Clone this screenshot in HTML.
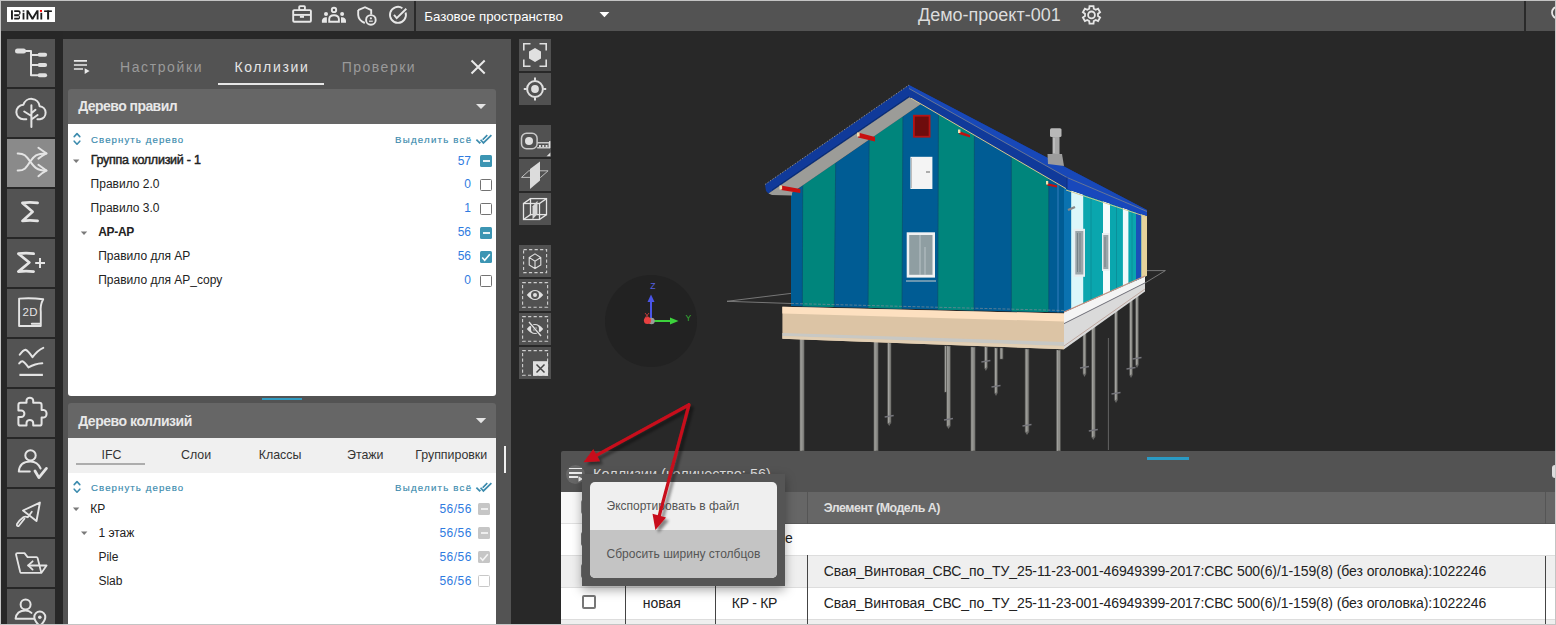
<!DOCTYPE html>
<html><head><meta charset="utf-8">
<style>
*{margin:0;padding:0;box-sizing:border-box}
html,body{width:1556px;height:625px;overflow:hidden;background:#282828;font-family:"Liberation Sans",sans-serif}
.a{position:absolute}
.t{position:absolute;white-space:nowrap;line-height:1}
#frame{position:absolute;left:0;top:0;width:1556px;height:625px;border:1px solid #c4c4c4;pointer-events:none;z-index:100}
.ib{position:absolute;left:7px;width:48px;height:48px;background:#535353}
.vb{position:absolute;left:519px;width:32px;height:32px;background:#515151}
.tr{font-size:12px;color:#222}
.num{position:absolute;white-space:nowrap;line-height:1;font-size:12px;color:#2f7be0;text-align:right;width:60px;margin-top:0.7px}
.cb{position:absolute;width:12px;height:12px;border:1.8px solid #727272;border-radius:1.5px;background:#fff}
.cbf{position:absolute;width:12px;height:12px;border-radius:1.5px;background:#3c95b3}
.cbg{position:absolute;width:12px;height:12px;border-radius:1.5px;background:#c6c6c6}
.lnk{font-size:9.7px;color:#3a8aad;letter-spacing:1.06px;-webkit-text-stroke:0.15px #3a8aad}
svg{position:absolute;left:0;top:0}
</style></head><body>
<!-- ===== header ===== -->
<div class="a" style="left:0;top:0;width:1556px;height:31px;background:#535353"></div>
<div class="a" style="left:414px;top:1px;width:2px;height:30px;background:#2a2a2a"></div>
<div class="t" style="left:424.3px;top:9.6px;font-size:13.3px;color:#fff">Базовое пространство</div>
<div class="t" style="left:918px;top:6px;font-size:18px;color:#dcdcdc">Демо-проект-001</div>
<div class="a" style="left:1524px;top:1px;width:2px;height:30px;background:#2a2a2a"></div>

<!-- ===== left dark strip + sidebar ===== -->
<div class="a" style="left:0;top:31px;width:63px;height:594px;background:#272727"></div>
<div class="ib" style="top:39px"></div>
<div class="ib" style="top:89px"></div>
<div class="ib" style="top:139px;background:#8a8a8a"></div>
<div class="ib" style="top:189px"></div>
<div class="ib" style="top:239px"></div>
<div class="ib" style="top:289px"></div>
<div class="ib" style="top:339px"></div>
<div class="ib" style="top:389px"></div>
<div class="ib" style="top:439px"></div>
<div class="ib" style="top:489px"></div>
<div class="ib" style="top:539px"></div>
<div class="ib" style="top:589px"></div>

<!-- ===== panel ===== -->
<div class="a" style="left:63px;top:39px;width:448px;height:586px;background:#535353"></div>
<div class="t" style="left:120px;top:60.4px;font-size:14px;color:#9a9a9a;letter-spacing:1.6px">Настройки</div>
<div class="t" style="left:234.4px;top:60.4px;font-size:14px;color:#e6e6e6;letter-spacing:1.64px">Коллизии</div>
<div class="t" style="left:341.7px;top:60.4px;font-size:14px;color:#9a9a9a;letter-spacing:1.5px">Проверки</div>
<div class="a" style="left:218px;top:83px;width:106px;height:2px;background:#e6e6e6"></div>

<!-- rules tree section -->
<div class="a" style="left:68px;top:89px;width:428px;height:35px;background:#666;border-radius:3px 3px 0 0"></div>
<div class="t" style="left:78.2px;top:99.1px;font-size:14px;font-weight:bold;color:#e8e8e8;letter-spacing:-0.55px">Дерево правил</div>
<div class="a" style="left:68px;top:124px;width:428px;height:272px;background:#fff;border-radius:0 0 3px 3px"></div>
<div class="t lnk" style="left:91px;top:134.8px">Свернуть дерево</div>
<div class="t lnk" style="left:395.1px;top:134.8px;letter-spacing:1.21px">Выделить всё</div>

<div class="t tr" style="left:90.7px;top:153.9px;font-size:12.5px;letter-spacing:-0.25px;-webkit-text-stroke:0.45px #222">Группа коллизий - 1</div>
<div class="t tr" style="left:90.6px;top:177.8px">Правило 2.0</div>
<div class="t tr" style="left:90.6px;top:201.8px">Правило 3.0</div>
<div class="t tr" style="left:98.2px;top:225.8px;font-weight:bold;font-size:12px;letter-spacing:-0.3px">АР-АР</div>
<div class="t tr" style="left:98.2px;top:249.8px">Правило для АР</div>
<div class="t tr" style="left:98.2px;top:273.8px">Правило для АР_сору</div>

<div class="num" style="left:411px;top:154.4px">57</div>
<div class="num" style="left:411px;top:177.8px">0</div>
<div class="num" style="left:411px;top:201.8px">1</div>
<div class="num" style="left:411px;top:225.8px">56</div>
<div class="num" style="left:411px;top:249.8px">56</div>
<div class="num" style="left:411px;top:273.8px">0</div>

<div class="cbf" style="left:480px;top:155px"><div class="a" style="left:2.5px;top:5px;width:7px;height:2px;background:#e8f2f6"></div></div>
<div class="cb" style="left:480px;top:179px"></div>
<div class="cb" style="left:480px;top:203px"></div>
<div class="cbf" style="left:480px;top:227px"><div class="a" style="left:2.5px;top:5px;width:7px;height:2px;background:#e8f2f6"></div></div>
<div class="cbf" style="left:480px;top:251px"></div>
<div class="cb" style="left:480px;top:275px"></div>

<!-- splitter -->
<div class="a" style="left:262px;top:398px;width:40px;height:2px;background:#309cc2"></div>

<!-- collisions tree section -->
<div class="a" style="left:68px;top:403px;width:428px;height:35px;background:#666;border-radius:3px 3px 0 0"></div>
<div class="t" style="left:78.2px;top:413.7px;font-size:14px;font-weight:bold;color:#e8e8e8;letter-spacing:-0.47px">Дерево коллизий</div>
<div class="a" style="left:68px;top:438px;width:428px;height:35px;background:#f0f0f0"></div>
<div class="a" style="left:76px;top:463px;width:69px;height:2px;background:#adadad"></div>
<div class="t tr" style="left:101.6px;top:448.7px;font-size:12.4px;color:#333">IFC</div>
<div class="t tr" style="left:181px;top:448.7px;font-size:12.4px;color:#333">Слои</div>
<div class="t tr" style="left:258.7px;top:448.7px;font-size:12.4px;color:#333">Классы</div>
<div class="t tr" style="left:347px;top:448.7px;font-size:12.4px;color:#333">Этажи</div>
<div class="t tr" style="left:415.2px;top:448.7px;font-size:12.4px;color:#333">Группировки</div>
<div class="a" style="left:504px;top:446px;width:2px;height:27px;background:#f0f0f0"></div>
<div class="a" style="left:68px;top:473px;width:428px;height:152px;background:#fff"></div>
<div class="t lnk" style="left:91px;top:482.8px">Свернуть дерево</div>
<div class="t lnk" style="left:395.1px;top:482.8px;letter-spacing:1.21px">Выделить всё</div>
<div class="t tr" style="left:90.2px;top:502.8px">КР</div>
<div class="t tr" style="left:98.4px;top:526.8px">1 этаж</div>
<div class="t tr" style="left:98.4px;top:550.8px">Pile</div>
<div class="t tr" style="left:98.4px;top:574.8px">Slab</div>
<div class="num" style="left:411.2px;top:502.8px;letter-spacing:0.45px;margin-left:0.6px">56/56</div>
<div class="num" style="left:411.2px;top:526.8px;letter-spacing:0.45px;margin-left:0.6px">56/56</div>
<div class="num" style="left:411.2px;top:550.8px;letter-spacing:0.45px;margin-left:0.6px">56/56</div>
<div class="num" style="left:411.2px;top:574.8px;letter-spacing:0.45px;margin-left:0.6px">56/56</div>
<div class="cbg" style="left:478px;top:503px"><div class="a" style="left:2.5px;top:5px;width:7px;height:2px;background:#eee"></div></div>
<div class="cbg" style="left:478px;top:527px"><div class="a" style="left:2.5px;top:5px;width:7px;height:2px;background:#eee"></div></div>
<div class="cbg" style="left:478px;top:551px"></div>
<div class="cb" style="left:478px;top:575px;border-color:#c8c8c8"></div>

<!-- ===== viewport toolbar ===== -->
<div class="vb" style="top:39px"></div>
<div class="vb" style="top:73px"></div>
<div class="vb" style="top:125px"></div>
<div class="vb" style="top:159px"></div>
<div class="vb" style="top:193px"></div>
<div class="vb" style="top:245px"></div>
<div class="vb" style="top:279px"></div>
<div class="vb" style="top:313px"></div>
<div class="vb" style="top:347px"></div>

<svg width="1556" height="625" viewBox="0 0 1556 625">
<defs>
<clipPath id="fw"><path d="M791 193.5 L921 104 L1066 188.5 L1064 312.5 L791 306 Z"/></clipPath>
<clipPath id="sw"><path d="M1064 188 L1147 215.6 L1147 275.7 L1064 312 Z"/></clipPath>
</defs>
<!-- axis gizmo -->
<circle cx="651" cy="321" r="46" fill="#222222"/>
<path d="M651 321 V300" stroke="#4a55e8" stroke-width="2"/>
<path d="M647.5 302 L651 294.5 L654.5 302 Z" fill="#4a55e8"/>
<path d="M651 321 H672" stroke="#3cd23c" stroke-width="2"/>
<path d="M670 317.5 L678.5 321 L670 324.5 Z" fill="#3cd23c"/>
<text x="650.3" y="288.8" font-family="Liberation Sans" font-size="8.5" fill="#5560e0">Z</text>
<text x="685.5" y="321.2" font-family="Liberation Sans" font-size="8.5" fill="#35b035">Y</text>
<circle cx="651.5" cy="321" r="3.2" fill="#9a9a9a"/>
<circle cx="647.5" cy="320.5" r="3.6" fill="#e84040"/>
<path d="M645 313 L649 318 M649 313 L645 318" stroke="#e04040" stroke-width="0.8"/>

<!-- ground plane thin lines -->
<path d="M727 301.3 L791 293.4 M727 301.3 L791 303.5 M1146.5 270.6 H1165.4 L1145 283" stroke="#8a8a8a" stroke-width="0.8" fill="none"/>

<!-- piles -->
<rect x="944.5" y="346" width="3" height="46" fill="#8c8c88" stroke="#4e4e4c" stroke-width="0.7"/>
<path d="M945.6 346 V392" stroke="#a8a8a4" stroke-width="0.8"/>
<rect x="984.4" y="347" width="3" height="21" fill="#8c8c88" stroke="#4e4e4c" stroke-width="0.7"/>
<path d="M985.5 347 V368" stroke="#a8a8a4" stroke-width="0.8"/>
<path d="M981.4 362 L990.4 360.5" stroke="#74747a" stroke-width="1.4"/>
<path d="M984.4 368 L985.9 371 L987.4 368 Z" fill="#6a6a68"/>
<rect x="994.5" y="348" width="3" height="45" fill="#8c8c88" stroke="#4e4e4c" stroke-width="0.7"/>
<path d="M995.6 348 V393" stroke="#a8a8a4" stroke-width="0.8"/>
<path d="M991.5 387 L1000.5 385.5" stroke="#74747a" stroke-width="1.4"/>
<path d="M994.5 393 L996.0 396 L997.5 393 Z" fill="#6a6a68"/>
<rect x="1000.0" y="348" width="3" height="11" fill="#8c8c88" stroke="#4e4e4c" stroke-width="0.7"/>
<path d="M1001.1 348 V359" stroke="#a8a8a4" stroke-width="0.8"/>
<rect x="1083.0" y="320" width="3" height="54" fill="#8c8c88" stroke="#4e4e4c" stroke-width="0.7"/>
<path d="M1084.1 320 V374" stroke="#a8a8a4" stroke-width="0.8"/>
<path d="M1080.0 368 L1089.0 366.5" stroke="#74747a" stroke-width="1.4"/>
<path d="M1083.0 374 L1084.5 377 L1086.0 374 Z" fill="#6a6a68"/>
<rect x="1114.4" y="305" width="3.2" height="95" fill="#8c8c88" stroke="#4e4e4c" stroke-width="0.7"/>
<path d="M1115.5 305 V400" stroke="#a8a8a4" stroke-width="0.8"/>
<path d="M1111.5 394 L1120.5 392.5" stroke="#74747a" stroke-width="1.4"/>
<path d="M1114.4 400 L1116.0 403 L1117.6 400 Z" fill="#6a6a68"/>
<rect x="1129.5" y="296" width="3" height="79" fill="#8c8c88" stroke="#4e4e4c" stroke-width="0.7"/>
<path d="M1130.6 296 V375" stroke="#a8a8a4" stroke-width="0.8"/>
<path d="M1126.5 369 L1135.5 367.5" stroke="#74747a" stroke-width="1.4"/>
<path d="M1129.5 375 L1131.0 378 L1132.5 375 Z" fill="#6a6a68"/>
<rect x="1135.5" y="293" width="3" height="72" fill="#8c8c88" stroke="#4e4e4c" stroke-width="0.7"/>
<path d="M1136.6 293 V365" stroke="#a8a8a4" stroke-width="0.8"/>
<path d="M1132.5 359 L1141.5 357.5" stroke="#74747a" stroke-width="1.4"/>
<path d="M1135.5 365 L1137.0 368 L1138.5 365 Z" fill="#6a6a68"/>
<path d="M1108.4 338 V450" stroke="#6a6a6a" stroke-width="0.9"/>
<rect x="799.9" y="338" width="4.2" height="113" fill="#8c8c88" stroke="#4e4e4c" stroke-width="0.7"/>
<path d="M801.0 338 V451" stroke="#a8a8a4" stroke-width="0.8"/>
<rect x="873.9" y="340" width="4.2" height="111" fill="#8c8c88" stroke="#4e4e4c" stroke-width="0.7"/>
<path d="M875.0 340 V451" stroke="#a8a8a4" stroke-width="0.8"/>
<rect x="887.4" y="343" width="3.6" height="80" fill="#8c8c88" stroke="#4e4e4c" stroke-width="0.7"/>
<path d="M888.5 343 V423" stroke="#a8a8a4" stroke-width="0.8"/>
<path d="M884.7 417 L893.7 415.5" stroke="#74747a" stroke-width="1.4"/>
<path d="M887.4 423 L889.2 426 L891.0 423 Z" fill="#6a6a68"/>
<rect x="946.7" y="346" width="3.6" height="80" fill="#8c8c88" stroke="#4e4e4c" stroke-width="0.7"/>
<path d="M947.8 346 V426" stroke="#a8a8a4" stroke-width="0.8"/>
<path d="M944.0 420 L953.0 418.5" stroke="#74747a" stroke-width="1.4"/>
<path d="M946.7 426 L948.5 429 L950.3 426 Z" fill="#6a6a68"/>
<rect x="970.9" y="347" width="4.2" height="104" fill="#8c8c88" stroke="#4e4e4c" stroke-width="0.7"/>
<path d="M972.0 347 V451" stroke="#a8a8a4" stroke-width="0.8"/>
<rect x="1025.1" y="349" width="3.8" height="83" fill="#8c8c88" stroke="#4e4e4c" stroke-width="0.7"/>
<path d="M1026.2 349 V432" stroke="#a8a8a4" stroke-width="0.8"/>
<path d="M1022.5 426 L1031.5 424.5" stroke="#74747a" stroke-width="1.4"/>
<path d="M1025.1 432 L1027.0 435 L1028.9 432 Z" fill="#6a6a68"/>
<rect x="1056.3" y="350" width="4.2" height="101" fill="#8c8c88" stroke="#4e4e4c" stroke-width="0.7"/>
<path d="M1057.4 350 V451" stroke="#a8a8a4" stroke-width="0.8"/>
<rect x="1091.5" y="316" width="3.6" height="121" fill="#8c8c88" stroke="#4e4e4c" stroke-width="0.7"/>
<path d="M1092.6 316 V437" stroke="#a8a8a4" stroke-width="0.8"/>
<path d="M1088.8 431 L1097.8 429.5" stroke="#74747a" stroke-width="1.4"/>
<path d="M1091.5 437 L1093.3 440 L1095.1 437 Z" fill="#6a6a68"/>
<!-- foundation side -->
<path d="M1064 312.5 L1145 276.3 L1145 291.4 L1064 349.3 Z" fill="#dadada"/>
<path d="M1064 312.5 L1145 276.3 L1145 282.9 L1064 323.6 Z" fill="#f4f4f4"/>

<path d="M1064 323.6 L1145 282.9" stroke="#60606a" stroke-width="0.9" fill="none"/>
<path d="M1064 346 L1145 289" stroke="#b89a90" stroke-width="0.8" fill="none"/>
<!-- foundation front -->
<path d="M782.4 306.7 L1064 313.5 L1064 349.3 L782.4 338.8 Z" fill="#dcc4a5"/>
<path d="M782.4 306.7 L1064 313.5 L1064 321.4 L782.4 313.6 Z" fill="#fde0c0"/>
<path d="M782.4 333 L1064 342 L1064 346 L782.4 336 Z" fill="#c8c8c4"/>
<path d="M782.4 336 L1064 346 L1064 349.3 L782.4 338.8 Z" fill="#e2cfb4"/>

<!-- front wall -->
<g clip-path="url(#fw)">
<rect x="780" y="100" width="300" height="220" fill="#005c94"/>
<path d="M803 100 L836.3 100 L834.2 312 L802.3 312 Z" fill="#00857c"/>
<path d="M869.4 100 L903 100 L902 312 L868 312 Z" fill="#00857c"/>
<path d="M938.5 100 L974.5 100 L974 312 L937.7 312 Z" fill="#00857c"/>
<path d="M1011.3 100 L1048.8 100 L1048.8 312 L1011.3 312 Z" fill="#00857c"/>
<path d="M1058 100 V320" stroke="#2a78b8" stroke-width="1.2"/>
<path d="M803 100 L802.3 312 M836.3 100 L834.2 312 M869.4 100 L868 312 M903 100 L902 312 M938.5 100 L937.7 312 M974.5 100 L974 312 M1011.3 100 V312 M1048.8 100 V312" stroke="#0a4e6e" stroke-width="0.7" fill="none"/>
</g>
<path d="M791 303.5 L1064 310.5" stroke="#7a8a96" stroke-width="0.7" stroke-dasharray="3 1.5"/>
<!-- vent, door, window -->
<rect x="913" y="114.8" width="17.5" height="22.8" fill="#b41414"/>
<rect x="914.8" y="116.6" width="13.9" height="19.2" fill="#6e0c0c"/>
<rect x="910.4" y="156.8" width="22" height="32.2" fill="#f4f4f4"/>
<path d="M911.5 158 V188" stroke="#999" stroke-width="0.6"/>
<path d="M926 172 H930" stroke="#666" stroke-width="1"/>
<rect x="906.7" y="232.3" width="28.3" height="45.3" fill="#f2f2f2"/>
<rect x="909.2" y="235" width="23.3" height="39.8" fill="#8f9ea2"/>
<path d="M920 235 V275 M925 247 V275" stroke="#c4cdd0" stroke-width="0.8"/>
<path d="M906 281 H936" stroke="#b0bcc4" stroke-width="1.2"/>

<!-- side wall -->
<g clip-path="url(#sw)">
<rect x="1060" y="180" width="90" height="140" fill="#0aa6ae"/>
<rect x="1064" y="180" width="7.2" height="140" fill="#0a72b0"/>
<rect x="1071.2" y="180" width="12" height="140" fill="#dcf7fa"/>
<rect x="1103" y="180" width="7" height="140" fill="#f4fbfc"/>
<rect x="1122.9" y="180" width="5.5" height="140" fill="#f0fafb"/>
<rect x="1136" y="180" width="5.3" height="140" fill="#1a50b8"/>
<rect x="1141.3" y="180" width="5.7" height="140" fill="#e6d29a"/>
<path d="M1091 180 V320 M1116.5 180 V320 M1132 180 V320" stroke="#0a8a94" stroke-width="0.8"/>
</g>
<rect x="1073.6" y="228.8" width="11.4" height="48" fill="#e8eef0"/>
<rect x="1075.3" y="231" width="8" height="43.5" fill="#9aa6aa"/>
<path d="M1077.5 233 V272 M1080 233 V272" stroke="#5a6a70" stroke-width="0.6"/>
<rect x="1102" y="233" width="7.6" height="37.9" fill="#e8eef0"/>
<rect x="1103.3" y="235" width="5" height="34" fill="#9aa6aa"/>
<path d="M1105 237 V267" stroke="#5a6a70" stroke-width="0.6"/>
<path d="M1064 312 L1145 276" stroke="#c89080" stroke-width="1.2"/>
<path d="M1068 210 L1075 207" stroke="#888" stroke-width="2.4"/>

<!-- roof -->
<path d="M765 184.5 L909 85 L1147 210 L1147 216 L1067 189 L909.5 97.3 L768.5 193.5 L766 191 Z" fill="#103a9a"/>
<path d="M909 85 L1147 210 L1147 212 L1067 177.5 L909 88.5 Z" fill="#1848b8"/>
<path d="M1067 177.5 L1147 211.5 L1147 216 L1067 189 Z" fill="#1848bc"/>
<path d="M909 88.5 L1067 177.5 L1147 211.5" stroke="#7a8290" stroke-width="0.8" fill="none"/>
<path d="M1067 177.5 V189" stroke="#0e2e80" stroke-width="1"/>
<path d="M765 184.5 L909 85" stroke="#8a8a88" stroke-width="1" stroke-dasharray="1.5 1.5"/>
<!-- soffit -->
<path d="M768.5 193.5 L909.5 97.3 L921 104 L792 192.8 L792 195.5 L772 195 Z" fill="#9c9c98"/>
<path d="M772 190 L909 96.5" stroke="#0a2a6a" stroke-width="0.9"/>
<path d="M911 98.2 L1066 188.6" stroke="#d8c890" stroke-width="1"/>
<path d="M1066 190 L1147 217" stroke="#d8c890" stroke-width="0.9"/>
<!-- red beams -->
<path d="M781 185.5 L800.3 189 L800.3 193 L781 190 Z" fill="#c81010"/>
<rect x="779.5" y="185.5" width="2.6" height="4" fill="#f0e0b0"/>
<path d="M858 132.5 L875 137 L875 141.5 L858 137.5 Z" fill="#c81010"/>
<rect x="857" y="132.5" width="2.6" height="4" fill="#f0e0b0"/>
<path d="M959 131 L970 135 L970 137.5 L959 134 Z" fill="#c01010"/>
<rect x="958" y="129.5" width="2.4" height="3.5" fill="#f0e0b0"/>
<path d="M1047 183 L1057 185.5 L1057 187.5 L1047 185.5 Z" fill="#c01010"/>
<rect x="1046" y="181" width="2.2" height="3.5" fill="#f0e0b0"/>
<!-- chimney -->
<rect x="1050" y="128.2" width="11.5" height="8.8" rx="1.5" fill="#b8b8b8"/>
<rect x="1052.5" y="137" width="7" height="17" fill="#a8a8a8"/>
<path d="M1054 138 V153" stroke="#d0d0d0" stroke-width="1"/>
<path d="M1047.5 154 H1062 L1064 166 L1048 164 Z" fill="#9c9c9c"/>
</svg>


<!-- ===== bottom panel ===== -->
<div class="a" style="left:561px;top:451px;width:995px;height:174px;background:#535353;border-radius:2px 0 0 0"></div>
<div class="a" style="left:1147px;top:457px;width:42px;height:3px;background:#2a9ac4"></div>
<div class="t" style="left:593px;top:467.1px;font-size:14.5px;color:#dedede">Коллизии (количество: 56)</div>
<div class="a" style="left:561px;top:492px;width:995px;height:32px;background:#666;border-bottom:1px solid #5a5a5a"></div>
<div class="a" style="left:561px;top:492px;width:64px;height:32px;background:#f8f8f8"></div>
<div class="a" style="left:807px;top:492px;width:1px;height:32px;background:#555"></div>
<div class="a" style="left:1545px;top:492px;width:1px;height:32px;background:#555"></div>
<div class="a" style="left:1552px;top:465px;width:6px;height:13px;border-radius:3px;background:#ddd"></div>
<div class="t" style="left:823.8px;top:502px;font-size:12.4px;letter-spacing:-0.47px;font-weight:bold;color:#e0e0e0">Элемент (Модель А)</div>
<div class="a" style="left:561px;top:524px;width:995px;height:31px;background:#fff"></div>
<div class="a" style="left:561px;top:555px;width:995px;height:32px;background:#efefef;border-top:1px solid #ddd"></div>
<div class="a" style="left:561px;top:587px;width:995px;height:32px;background:#fff;border-top:1px solid #ddd"></div>
<div class="a" style="left:561px;top:619px;width:995px;height:6px;background:#efefef;border-top:1px solid #ddd"></div>
<div class="a" style="left:561px;top:523px;width:64px;height:1px;background:#e0e0e0"></div>
<div class="a" style="left:625px;top:555px;width:1px;height:70px;background:#444"></div>
<div class="a" style="left:715px;top:555px;width:1px;height:70px;background:#444"></div>
<div class="a" style="left:807px;top:555px;width:1px;height:70px;background:#444"></div>
<div class="a" style="left:1545px;top:556px;width:1px;height:69px;background:#444"></div>
<div class="t" style="left:785px;top:531px;font-size:14px;color:#222">е</div>
<div class="t" style="left:823.8px;top:564.2px;font-size:14px;letter-spacing:-0.085px;color:#222">Свая_Винтовая_СВС_по_ТУ_25-11-23-001-46949399-2017:СВС 500(6)/1-159(8) (без оголовка):1022246</div>
<div class="t" style="left:823.8px;top:596.2px;font-size:14px;letter-spacing:-0.085px;color:#222">Свая_Винтовая_СВС_по_ТУ_25-11-23-001-46949399-2017:СВС 500(6)/1-159(8) (без оголовка):1022246</div>
<div class="t" style="left:642.7px;top:595.7px;font-size:14px;color:#222">новая</div>
<div class="t" style="left:731.8px;top:595.7px;font-size:14px;letter-spacing:-0.3px;color:#222">КР - КР</div>
<div class="a" style="left:582px;top:595px;width:14px;height:14px;border:2px solid #777;border-radius:2px;background:#fff"></div>

<div class="a" style="left:566px;top:465px;width:19px;height:19px;border-radius:50%;background:#676767"></div>
<div class="a" style="left:569px;top:467.8px;width:13px;height:1.7px;background:#eaeaea"></div>
<div class="a" style="left:569px;top:472px;width:13px;height:1.7px;background:#eaeaea"></div>
<div class="a" style="left:569px;top:476.2px;width:8.5px;height:1.7px;background:#eaeaea"></div>
<svg width="1556" height="625" style="pointer-events:none"><path d="M578.5 476.2 L583 479 L578.5 481.8 Z" fill="#eaeaea"/></svg>
<div class="a" style="left:581px;top:500px;width:14px;height:14px;border:2px solid #888;border-radius:2px"></div>
<div class="a" style="left:581px;top:532px;width:14px;height:14px;border:2px solid #777;border-radius:2px;background:#fff"></div>
<div class="a" style="left:581px;top:564px;width:14px;height:14px;border:2px solid #777;border-radius:2px;background:#fff"></div>
<!-- popup -->
<div class="a" style="left:582px;top:474px;width:203px;height:112px;background:#555;box-shadow:0 4px 10px rgba(0,0,0,0.35)"></div>
<div class="a" style="left:590px;top:482px;width:187px;height:96px;background:#efefef;border-radius:5px;overflow:hidden">
  <div class="a" style="left:0;top:48px;width:187px;height:48px;background:#c4c4c4"></div>
</div>
<div class="t" style="left:606.5px;top:500px;font-size:12px;color:#555">Экспортировать в файл</div>
<div class="t" style="left:606.5px;top:548px;font-size:12px;color:#555">Сбросить ширину столбцов</div>

<svg width="1556" height="625" viewBox="0 0 1556 625" style="z-index:50;pointer-events:none">
<!-- logo -->
<rect x="7" y="7" width="48" height="15" fill="#fff"/>
<g fill="#1e1e1e">
<rect x="11" y="10.3" width="1.9" height="9.2"/>
<path d="M14.2 10.3 H18.3 A2.4 2.4 0 0 1 18.3 15.1 A2.3 2.3 0 0 1 18.6 19.5 H14.2 V17.8 H18.4 A0.8 0.8 0 0 0 18.4 16.2 H14.2 V14.3 H18.2 A0.7 0.7 0 0 0 18.2 12.0 H14.2 Z"/>
<rect x="22.6" y="10.3" width="1.8" height="1.4"/>
<rect x="22.6" y="12.8" width="1.8" height="6.7"/>
<path d="M26.5 10.3 H28.4 L32.5 17.0 L36.6 10.3 H38.5 V19.5 H36.7 V13.6 L33.3 19.5 H31.7 L28.3 13.6 V19.5 H26.5 Z"/>
<rect x="40.4" y="12.8" width="1.8" height="6.7"/>
<rect x="44.1" y="10.4" width="7.8" height="1.6"/>
<rect x="47.1" y="10.4" width="2.0" height="9.1"/>
</g>
<rect x="39.9" y="10" width="2.1" height="1.9" fill="#f00"/>

<!-- header icons -->
<g fill="none" stroke="#e8e8e8" stroke-width="1.9">
<rect x="293.2" y="10.1" width="17.7" height="11.7" rx="1"/>
<rect x="299.2" y="6.1" width="5.7" height="4" rx="0.8"/>
<path d="M293.2 14.9 H310.9"/>
<circle cx="334" cy="9.9" r="2.2"/>
<path d="M329.2 21.8 V19 Q329.5 15.3 334 15.3 Q338.5 15.3 338.9 19 V21.8 Z"/>
<path d="M358.2 10.1 L365 7.2 L371.2 10.1 V14.5 M358.2 10.1 V15 Q358.5 20.5 364.8 23"/>
<circle cx="370.9" cy="19.9" r="4.8"/>
<path d="M402.4 8.2 A8 8 0 1 0 405.6 12.5"/>
<path d="M394 14.9 L396.7 18.2 L406.3 8.7"/>
</g>
<rect x="299.9" y="15.7" width="4.1" height="2.1" fill="#e8e8e8"/>
<g fill="#e8e8e8">
<circle cx="326" cy="14.1" r="2"/><circle cx="342.1" cy="14.1" r="2"/>
<path d="M321.9 22.8 V20.5 Q322.3 17.6 325.9 17.2 L326.9 17.2 L326.9 22.8 Z"/>
<path d="M346 22.8 V20.5 Q345.6 17.6 342 17.2 L341 17.2 L341 22.8 Z"/>
<circle cx="370.9" cy="18.3" r="1.1"/>
<rect x="369" y="20.6" width="3.8" height="1.2"/>
</g>
<path d="M599.5 12 H609.4 L604.45 17.3 Z" fill="#fff"/>
<path d="M1089.24 8.70 L1089.48 6.13 L1093.52 6.13 L1093.76 8.70 L1095.74 9.84 L1098.08 8.76 L1100.11 12.27 L1098.00 13.75 L1098.00 16.05 L1100.11 17.53 L1098.08 21.04 L1095.74 19.96 L1093.76 21.10 L1093.52 23.67 L1089.48 23.67 L1089.24 21.10 L1087.26 19.96 L1084.92 21.04 L1082.89 17.53 L1085.00 16.05 L1085.00 13.75 L1082.89 12.27 L1084.92 8.76 L1087.26 9.84 Z" fill="none" stroke="#e6e6e6" stroke-width="1.8" stroke-linejoin="miter"/>
<circle cx="1091.5" cy="14.9" r="3.4" fill="none" stroke="#e6e6e6" stroke-width="1.8"/>
<circle cx="1558" cy="12.5" r="6" fill="none" stroke="#e6e6e6" stroke-width="1.8"/>

<!-- sidebar icons -->
<g fill="none" stroke="#e4e4e4" stroke-width="2" stroke-linecap="round" stroke-linejoin="round">
<!-- 1 tree structure -->
<path d="M26 51 H31 V75.3 M31 55 H37.5 M31 65 H37.5 M31 75.3 H37.5"/>
<!-- 2 tree cloud -->
<path d="M26.3 119.2 H23.7 A7.2 7.2 0 0 1 23.4 104.8 A8.3 8.3 0 0 1 39.6 106.2 A6.6 6.6 0 0 1 40 119.3 H37.4"/>
<path d="M31.4 105.3 V127 M24.2 111.5 L31.4 116 M31.4 113.2 L35.5 109.8 M31.4 119.5 L37.6 115"/>
<!-- 3 shuffle -->
<path d="M17.7 153.4 C24.5 153.2 26.5 156.5 30.2 161.5 C34 166.8 36.5 170.6 46.4 170.6"/>
<path d="M17.7 170.6 C24.5 170.8 26.5 167.5 30.2 161.5 C34 156 36.5 153.4 46.4 153.4"/>
<path d="M38.4 147.8 Q42.5 150.8 46.4 153.4 Q42.5 155.5 38.4 158.6"/>
<path d="M38.4 164.8 Q42.5 167.8 46.4 170.6 Q42.5 172.5 38.4 176.2"/>
<!-- 4 sigma -->
<path d="M37.6 202.9 Q30 201.8 22.4 202.9 L32.6 211.8 L22.4 220.9 Q30 219.8 37.6 220.9" stroke-width="2.7"/>
<!-- 5 sigma plus -->
<path d="M33.6 253.7 Q26 252.6 18.4 253.7 L29.3 262.5 L18.4 271.6 Q26 270.5 33.6 271.6" stroke-width="2.7"/>
<path d="M35.2 263 H45 M40 258.1 V267.9" stroke-linecap="butt"/>
<!-- 6 2D doc -->
<path d="M19.1 298.6 Q31 297.6 43.2 299.2 Q40 305 40.8 312 V326 H19.1 Z" stroke-width="1.9"/>
<path d="M31.8 323.8 H39.8" stroke-width="1.9"/>
<!-- 7 chart -->
<path d="M19.7 354.8 Q23 350 25.5 349.7 Q28 350.5 32.5 357.1 Q38 350 43.3 347.8"/>
<path d="M19.2 363.4 Q21 361.2 22.4 361.3 Q24 361.5 28.5 367.4 Q35 363.5 42.3 363.2"/>
<path d="M19.4 374.9 H42.9" stroke-width="2.2" stroke-linecap="butt"/>
<!-- 8 puzzle -->
<path d="M18.4 405 A2.2 2.2 0 0 1 20.6 402.8 H26.5 V400.6 A3.35 2.9 0 0 1 33.2 400.6 V402.8 H39.4 A2.2 2.2 0 0 1 41.6 405 V410.1 H43.8 A2.8 3.7 0 0 1 43.8 417.5 H41.6 V423.4 A2.2 2.2 0 0 1 39.4 425.6 H33.2 V423 A3.35 3.1 0 0 0 26.5 423 V425.6 H20.6 A2.2 2.2 0 0 1 18.4 423.4 V416.9 H21.2 A3.2 3.2 0 0 0 21.2 410.5 H18.4 Z"/>
<!-- 9 user check -->
<circle cx="30.5" cy="455.4" r="5.2"/>
<path d="M29.8 471.6 H18.8 Q19.5 461.5 30.5 461.5 Q37.5 461.5 40.6 468.5"/>
<path d="M35 471 L38.9 477.6 L46.4 468.4" stroke-width="2.8"/>
<!-- 10 trowel -->
<path d="M23 510.5 L39.9 502.6 L36.5 521 Z" stroke-width="1.9"/>
<path d="M31.8 511.8 L27.8 517.3 Q25.5 516.2 23.6 517 Q19.5 520 17 524 Q16.3 526.5 18.7 526 Q21.5 522.5 24.5 518.8" stroke-width="1.8"/>
<!-- 11 folder -->
<path d="M41.3 572.9 H21.3 Q20.5 572.9 20.2 572 L16 554.5 Q16 553.1 17.5 553.1 H24.5 L27.6 557.1 H36.6 Q37.3 557.1 37.6 558 L41.3 572.9 L46.6 565.5 H28.2" stroke-width="1.8"/>
<path d="M32.6 561.3 L28.2 565.4 L32.6 569.6" stroke-width="1.8"/>
<!-- 12 user pin -->
<circle cx="25.6" cy="604.4" r="5"/>
<path d="M31.5 612.9 Q29 610.5 25.6 610.5 Q16.5 610.5 15.6 618.7 H33.8"/>
<path d="M39.8 626 Q34.3 621 34.3 617 A5.5 5.5 0 0 1 45.3 617 Q45.3 621 39.8 626"/>
</g>
<rect x="15" y="48.5" width="11" height="5" rx="2.5" fill="#e0e0e0"/>
<rect x="37.6" y="52.8" width="9.5" height="4" rx="2" fill="#e0e0e0"/>
<rect x="37.6" y="63" width="9.5" height="4" rx="2" fill="#e0e0e0"/>
<rect x="37.6" y="73.2" width="9.5" height="4" rx="2" fill="#e0e0e0"/>
<text x="22.6" y="315.9" font-family="Liberation Sans" font-size="11.5" fill="#e4e4e4" letter-spacing="0.3">2D</text>
<circle cx="39.8" cy="617.3" r="1.8" fill="#e4e4e4"/>

<!-- panel icons -->
<g fill="none" stroke="#eaeaea" stroke-width="1.7">
<path d="M73.9 60.9 H87 M73.9 65 H87 M73.9 69 H83"/>
<path d="M471.5 60.5 L484.7 73.5 M484.7 60.5 L471.5 73.5" stroke-width="2"/>
</g>
<path d="M84.7 68.2 L89.6 71 L84.7 73.9 Z" fill="#eaeaea"/>
<path d="M476 104 H486 L481 109 Z" fill="#e4e4e4"/>
<path d="M475.8 418 H486.2 L481 423.3 Z" fill="#e4e4e4"/>
<g fill="#7a7a7a">
<path d="M73 159.6 H79.4 L76.2 163 Z"/>
<path d="M80.8 231.6 H87.2 L84 235 Z"/>
<path d="M72.9 507.6 H79.3 L76.1 511 Z"/>
<path d="M81 531.6 H87.4 L84.2 535 Z"/>
</g>
<g fill="none" stroke="#3d8cae" stroke-width="1.6" stroke-linecap="round" stroke-linejoin="round">
<path d="M74.2 136.6 L77 133.6 L79.8 136.6 M74.2 141.2 L77 144.2 L79.8 141.2"/>
<path d="M74.2 484.6 L77 481.6 L79.8 484.6 M74.2 489.2 L77 492.2 L79.8 489.2"/>
</g>
<g fill="none" stroke="#3d8cae" stroke-width="1.7">
<path d="M476.4 139.6 L479.6 142.8 L487.3 135.2"/>
<path d="M480.6 139.8 L483.4 142.9 L491.4 135.1" stroke="#fff" stroke-width="3.2"/>
<path d="M480.6 139.8 L483.4 142.9 L491.4 135.1"/>
<path d="M476.4 487.6 L479.6 490.8 L487.3 483.2"/>
<path d="M480.6 487.8 L483.4 490.9 L491.4 483.1" stroke="#fff" stroke-width="3.2"/>
<path d="M480.6 487.8 L483.4 490.9 L491.4 483.1"/>
</g>
<path d="M482.2 257.5 L484.7 260.2 L489.8 254.3" fill="none" stroke="#fff" stroke-width="1.6"/>
<path d="M480.2 557.5 L482.7 560.2 L487.8 554.3" fill="none" stroke="#f4f4f4" stroke-width="1.6"/>

<!-- viewport toolbar icons -->
<g fill="none" stroke="#e0e0e0" stroke-width="1.6">
<path d="M523.8 50.5 V43.8 H530.5 M539.5 43.8 H546.2 V50.5 M546.2 59.5 V66.2 H539.5 M530.5 66.2 H523.8 V59.5"/>
<circle cx="535" cy="89" r="7.9" stroke-width="2"/>
<path d="M535 77.6 V80.5 M535 97.5 V100.4 M523.8 89 H526.6 M543.4 89 H546.2" stroke-width="2"/>
<rect x="521.5" y="133.2" width="15.6" height="15.6" rx="5" stroke="#c8c8c8" stroke-width="1.5"/>
<path d="M537.2 142.8 H549.2 V147.8 H537.2" stroke="#c8c8c8" stroke-width="1.4"/>
<path d="M521.5 177.4 L528.8 170.8 H548.1 L540.6 177.4 Z" stroke="#c0c0c0" stroke-width="1"/>
<g stroke="#e4e4e4" stroke-width="1.3">
<rect x="523.5" y="203.5" width="16" height="16"/>
<rect x="530.5" y="198.6" width="16" height="16"/>
<path d="M523.5 203.5 L530.5 198.6 M539.5 203.5 L546.5 198.6 M539.5 219.5 L546.5 214.6 M523.5 219.5 L530.5 214.6"/>
</g>
<g stroke="#d0d0d0" stroke-width="1.1" stroke-dasharray="3.2 2.3">
<rect x="523.6" y="249.6" width="23" height="23"/>
<rect x="522.6" y="282.6" width="25" height="24.6"/>
<rect x="522.6" y="316.6" width="25" height="24.6"/>
<rect x="522.6" y="350.6" width="25" height="24.6"/>
</g>
<path d="M535 253.9 L540.8 257.5 V265 L535 268.5 L529.2 265 V257.5 Z M529.2 257.5 L535 261.2 L540.8 257.5 M535 261.2 V268.5" stroke="#e0e0e0" stroke-width="1.1"/>
</g>
<g fill="#e0e0e0">
<path d="M526.7 55 H546.6 M535 48 L541 51.5 V58.5 L535 62 L529 58.5 V51.5 Z"/>
<circle cx="535" cy="89" r="3.9"/>
<circle cx="529" cy="140.9" r="4"/>
<rect x="549" y="141.1" width="1.4" height="7"/>
<rect x="539" y="145" width="1.9" height="2" /><rect x="542.3" y="145" width="1.9" height="2"/><rect x="545.6" y="145" width="1.9" height="2"/>
<path d="M550.4 152.4 V156.2 H546.6 Z"/>
<path d="M530 169.1 L540 161.6 V180.6 L530 189 Z" fill="#dcdcdc"/>
<path d="M532.5 206.2 L537.5 200.8 V214 L532.5 219.4 Z" fill="#d8d8d8"/>
<path d="M526.8 295 Q535 285 543.2 295 Q535 305 526.8 295 Z"/>
<path d="M526.8 329 Q535 319 543.2 329 Q535 339 526.8 329 Z"/>
<rect x="533" y="361.2" width="15" height="14.6"/>
</g>
<circle cx="535" cy="295" r="3" fill="none" stroke="#555" stroke-width="2"/>
<circle cx="535" cy="329" r="3" fill="none" stroke="#555" stroke-width="2"/>
<path d="M529 322 L541 336" stroke="#515151" stroke-width="2.8"/>
<path d="M529 322 L541 336" stroke="#e0e0e0" stroke-width="1.3"/>
<path d="M536.5 364.5 L544.5 372.5 M544.5 364.5 L536.5 372.5" stroke="#444" stroke-width="1.5"/>
</svg>


<svg width="1556" height="625" viewBox="0 0 1556 625" style="z-index:60;pointer-events:none">
<defs><filter id="sh" x="-20%" y="-20%" width="140%" height="140%"><feGaussianBlur in="SourceAlpha" stdDeviation="1.6"/><feOffset dx="3" dy="3"/><feComponentTransfer><feFuncA type="linear" slope="0.45"/></feComponentTransfer><feMerge><feMergeNode/><feMergeNode in="SourceGraphic"/></feMerge></filter></defs>
<g filter="url(#sh)">
<path d="M689 404.75 L594.9 456.1 M689 404.75 L658.8 517.5" stroke="#c8101a" stroke-width="3.2" stroke-linecap="round" fill="none"/>
<path d="M583.5 462.3 L593.3 449.0 L600.0 461.3 Z" fill="#c8101a"/>
<path d="M655.4 530.1 L652.5 513.8 L666.0 517.4 Z" fill="#c8101a"/>
</g>
</svg>

<div id="frame"></div>
</body></html>
